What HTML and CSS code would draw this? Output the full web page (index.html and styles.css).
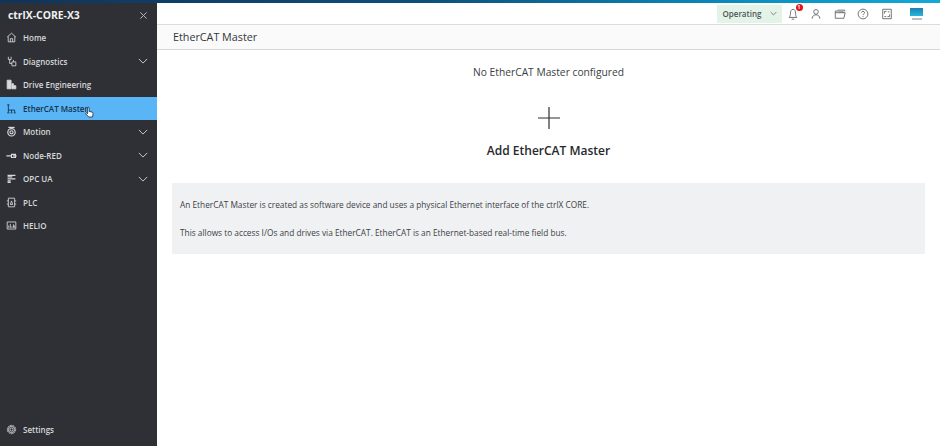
FILE: index.html
```html
<!DOCTYPE html>
<html lang="en">
<head>
<meta charset="utf-8">
<title>EtherCAT Master</title>
<link rel="stylesheet" href="styles.css">
</head>
<body>
<div class="strip"></div>
<div class="app">
  <aside class="sidebar">
    <div class="brand"><span>ctrlX-CORE-X3</span>
      <svg class="close" viewBox="0 0 10 10"><path d="M1.500 1.500l7 7M8.500 1.500l-7 7"/></svg>
    </div>
    <nav class="nav">
      <a class="item"><svg class="ico" viewBox="0 0 14 14"><path d="M1.500 6.500L7 1.500l5.500 5M2.800 5.500V12.500H11.200V5.500M5.500 12.500V8.500H8.500V12.500"/></svg><span>Home</span></a>
      <a class="item"><svg class="ico" viewBox="0 0 14 14"><path d="M3 1V4.500H6.500V1M4.700 4.500V9.500H7.500M7.500 7.500H12.500V12.500H7.500zM9.500 5V7.500"/></svg><span>Diagnostics</span><svg class="chev" viewBox="0 0 12 7"><path d="M1 1l5 5 5-5"/></svg></a>
      <a class="item"><svg class="ico solid" viewBox="0 0 14 14"><path d="M1.500 1.500H6.500V12.500H1.500zM7.500 6H9.500V8.500H12.500V12.500H7.500z"/></svg><span>Drive Engineering</span></a>
      <a class="item active"><svg class="ico" viewBox="0 0 14 14"><path d="M3 2V12M1.500 12.500H4.500M7 9V12M5.800 12.500H8.200M11 9V12M9.800 12.500H12.500M3 9H11M1.500 2.500H4.500"/></svg><span>EtherCAT Master</span></a>
      <a class="item"><svg class="ico thick" viewBox="0 0 14 14"><circle cx="7" cy="8" r="4.700"/><circle cx="7" cy="8" r="2"/><path d="M3 1.800H11"/></svg><span>Motion</span><svg class="chev" viewBox="0 0 12 7"><path d="M1 1l5 5 5-5"/></svg></a>
      <a class="item"><svg class="ico thick" viewBox="0 0 14 14"><path d="M.5 7.500H7M7 5.500H12V9.500H7zM9 7.500H13.500"/></svg><span>Node-RED</span><svg class="chev" viewBox="0 0 12 7"><path d="M1 1l5 5 5-5"/></svg></a>
      <a class="item"><svg class="ico thick" viewBox="0 0 14 14"><path d="M2 3H12M2 5H8M2 7.500H12M2 10H6M2 12H6"/></svg><span>OPC UA</span><svg class="chev" viewBox="0 0 12 7"><path d="M1 1l5 5 5-5"/></svg></a>
      <a class="item"><svg class="ico" viewBox="0 0 14 14"><path d="M3 1.500H11V12.500H3zM1 5H3M1 9H3M11 5H13M11 9H13M5.500 9.500L7 5l1.500 4.500z"/></svg><span>PLC</span></a>
      <a class="item"><svg class="ico" viewBox="0 0 14 14"><path d="M1.500 2.500H12.500V11.500H1.500zM3.500 10V7M5.500 10V5M7.500 10V8M9.500 10V5.500M11 10V7"/></svg><span>HELIO</span></a>
    </nav>
    <a class="item settings"><svg class="ico" viewBox="0 0 14 14"><circle cx="7" cy="7" r="2"/><circle cx="7" cy="7" r="5.300" stroke-dasharray="2.400 .8"/><circle cx="7" cy="7" r="4"/></svg><span>Settings</span></a>
    <svg class="cursor" viewBox="0 0 12 15"><path d="M3.500 1.500a1 1 0 0 1 2 0V6l4 1c1 .3 1.500 1 1.300 2L10 13.500H5L1 9.500c-.6-1 .4-2 1.500-1.200l1 .8z"/></svg>
  </aside>
  <main class="main">
    <header class="topbar">
      <div class="status"><span>Operating</span><svg class="status-chev" viewBox="0 0 10 6"><path d="M1 1l4 4 4-4"/></svg></div>
      <div class="tools">
        <div class="tool bell"><svg viewBox="0 0 14 14"><path d="M2.500 11c1.200-1 1.500-2.800 1.500-5S5 1.500 7 1.500 10 3.800 10 6s.3 4 1.500 5zM5.500 13H8.500"/></svg><b class="badge">1</b></div>
        <div class="tool"><svg viewBox="0 0 14 14"><circle cx="7" cy="4.500" r="2.700"/><path d="M2.500 12.500c0-3 2-4.500 4.500-4.500s4.500 1.500 4.500 4.500"/></svg></div>
        <div class="tool"><svg viewBox="0 0 14 14"><path d="M1.500 5.500V12H11.500L13 5.500zM1.500 5.500V3.500H5L6 4.500H11V5.500M4.500 2.500H12.500V4"/></svg></div>
        <div class="tool"><svg viewBox="0 0 14 14"><circle cx="7" cy="7" r="5.700"/><path d="M5.300 5.500C5.300 3.300 8.800 3.300 8.800 5.500 8.800 7 7 6.800 7 8.300M7 9.500V10.500"/></svg></div>
        <div class="tool"><svg viewBox="0 0 14 14"><path d="M2 1.500H12V12.500H2zM4 4H6.500M4 4V6.500M10 10H7.500M10 10V7.500M8 4.500L10 4.500M4 10L6 10"/></svg></div>
      </div>
      <div class="logo"><div class="logo-mark"></div><div class="logo-text"></div></div>
    </header>
    <div class="subheader">EtherCAT Master</div>
    <section class="content">
      <p class="empty">No EtherCAT Master configured</p>
      <svg class="plus" viewBox="0 0 22 22"><path d="M11 0V22M0 11H22"/></svg>
      <h2 class="add">Add EtherCAT Master</h2>
      <div class="info">
        <p>An EtherCAT Master is created as software device and uses a physical Ethernet interface of the ctrlX CORE.</p>
        <p>This allows to access I/Os and drives via EtherCAT. EtherCAT is an Ethernet-based real-time field bus.</p>
      </div>
    </section>
  </main>
</div>
</body>
</html>
```
FILE: styles.css
```css
* { box-sizing: border-box; }
html, body { height: 100%; }
body {
  margin: 0;
  display: flex;
  flex-direction: column;
  background: #fff;
  color: #2b2f33;
  font-family: "Open Sans", "Noto Sans", sans-serif;
  overflow: hidden;
}
.strip {
  height: 3px;
  flex: none;
  background: linear-gradient(90deg, #10335a 0%, #0e4f7c 45%, #0a8fbe 80%, #12a9d8 100%);
}
.app { flex: 1; display: flex; min-height: 0; }
.sidebar {
  position: relative;
  width: 157px;
  flex: none;
  display: flex;
  flex-direction: column;
  background: #2e3035;
  color: #d6d8da;
}
.brand {
  height: 22.500px;
  padding: 2px 9px 0 8px;
  display: flex;
  align-items: center;
  justify-content: space-between;
  color: #f0f1f2;
  font-size: 10.400px;
  font-weight: 700;
}
.close { width: 9px; height: 9px; fill: none; stroke: #b5b7ba; stroke-width: 1.100; }
.nav { padding-top: .5px; display: flex; flex-direction: column; }
.item {
  height: 23.500px;
  flex: none;
  padding: 0 9px 0 6px;
  display: flex;
  align-items: center;
  gap: 6px;
  font-size: 8px;
  font-weight: 600;
}
.item span { flex: 1; white-space: nowrap; }
.ico { width: 11px; height: 11px; flex: none; fill: none; stroke: currentColor; stroke-width: 1.100; }
.ico.solid { fill: currentColor; }
.ico.thick { stroke-width: 1.500; }
.chev { width: 10px; height: 6px; fill: none; stroke: #c4c6c9; stroke-width: 1.200; }
.active { background: #59b5f5; color: #14324d; }
.settings { margin-top: auto; height: 33px; }
.cursor {
  position: absolute;
  left: 85px;
  top: 103px;
  width: 9px;
  height: 13px;
  fill: #fff;
  stroke: #15202b;
  stroke-width: 1;
}
.main { flex: 1; min-width: 0; display: flex; flex-direction: column; }
.topbar {
  height: 22px;
  flex: none;
  padding-right: 17px;
  display: flex;
  align-items: center;
  justify-content: flex-end;
  border-bottom: 1px solid #dcdcdc;
}
.status {
  width: 65px;
  height: 18px;
  margin-right: 5px;
  padding: 0 5px 0 6px;
  display: flex;
  align-items: center;
  justify-content: space-between;
  background: #e4f3e8;
  color: #4d5357;
  font-size: 8px;
  font-weight: 600;
}
.status-chev { width: 7px; height: 5px; fill: none; stroke: #5b6165; stroke-width: 1.100; }
.tools { display: flex; gap: 11.500px; }
.tool { position: relative; width: 12px; height: 12px; }
.tool svg { display: block; width: 12px; height: 12px; fill: none; stroke: #5c6064; stroke-width: 1; }
.badge {
  position: absolute;
  top: -4px;
  right: -4px;
  width: 7px;
  height: 7px;
  border-radius: 50%;
  background: #e0141c;
  color: #fff;
  font-size: 5px;
  line-height: 7px;
  text-align: center;
}
.logo { width: 13px; margin-left: 17.500px; display: flex; flex-direction: column; gap: 2px; }
.logo-mark { height: 8px; background: linear-gradient(180deg, #1c7fb5, #27b7d9); }
.logo-text { height: 2px; width: 10px; align-self: center; background: #b9c0c5; }
.subheader {
  height: 25px;
  flex: none;
  padding: 0 16px;
  display: flex;
  align-items: center;
  background: #fafafa;
  border-bottom: 1px solid #d6d6d6;
  font-size: 10.750px;
  color: #33373b;
}
.content { flex: 1; padding: 0 15px; display: flex; flex-direction: column; align-items: center; }
.empty { margin: 14px 0 0; height: 16px; line-height: 16px; font-size: 10.250px; color: #3a3e42; }
.plus { width: 22px; height: 22px; margin-top: 27px; flex: none; fill: none; stroke: #2b2f33; stroke-width: 1.200; }
.add { margin: 14px 0 0; height: 16px; line-height: 16px; font-size: 12px; font-weight: 600; color: #26292c; }
.info {
  align-self: stretch;
  height: 71px;
  margin-top: 24px;
  padding: 17px 8px;
  background: #eff1f3;
  font-size: 8.300px;
  color: #3d4145;
}
.info p { margin: 0 0 17.500px; line-height: 10px; }
```
